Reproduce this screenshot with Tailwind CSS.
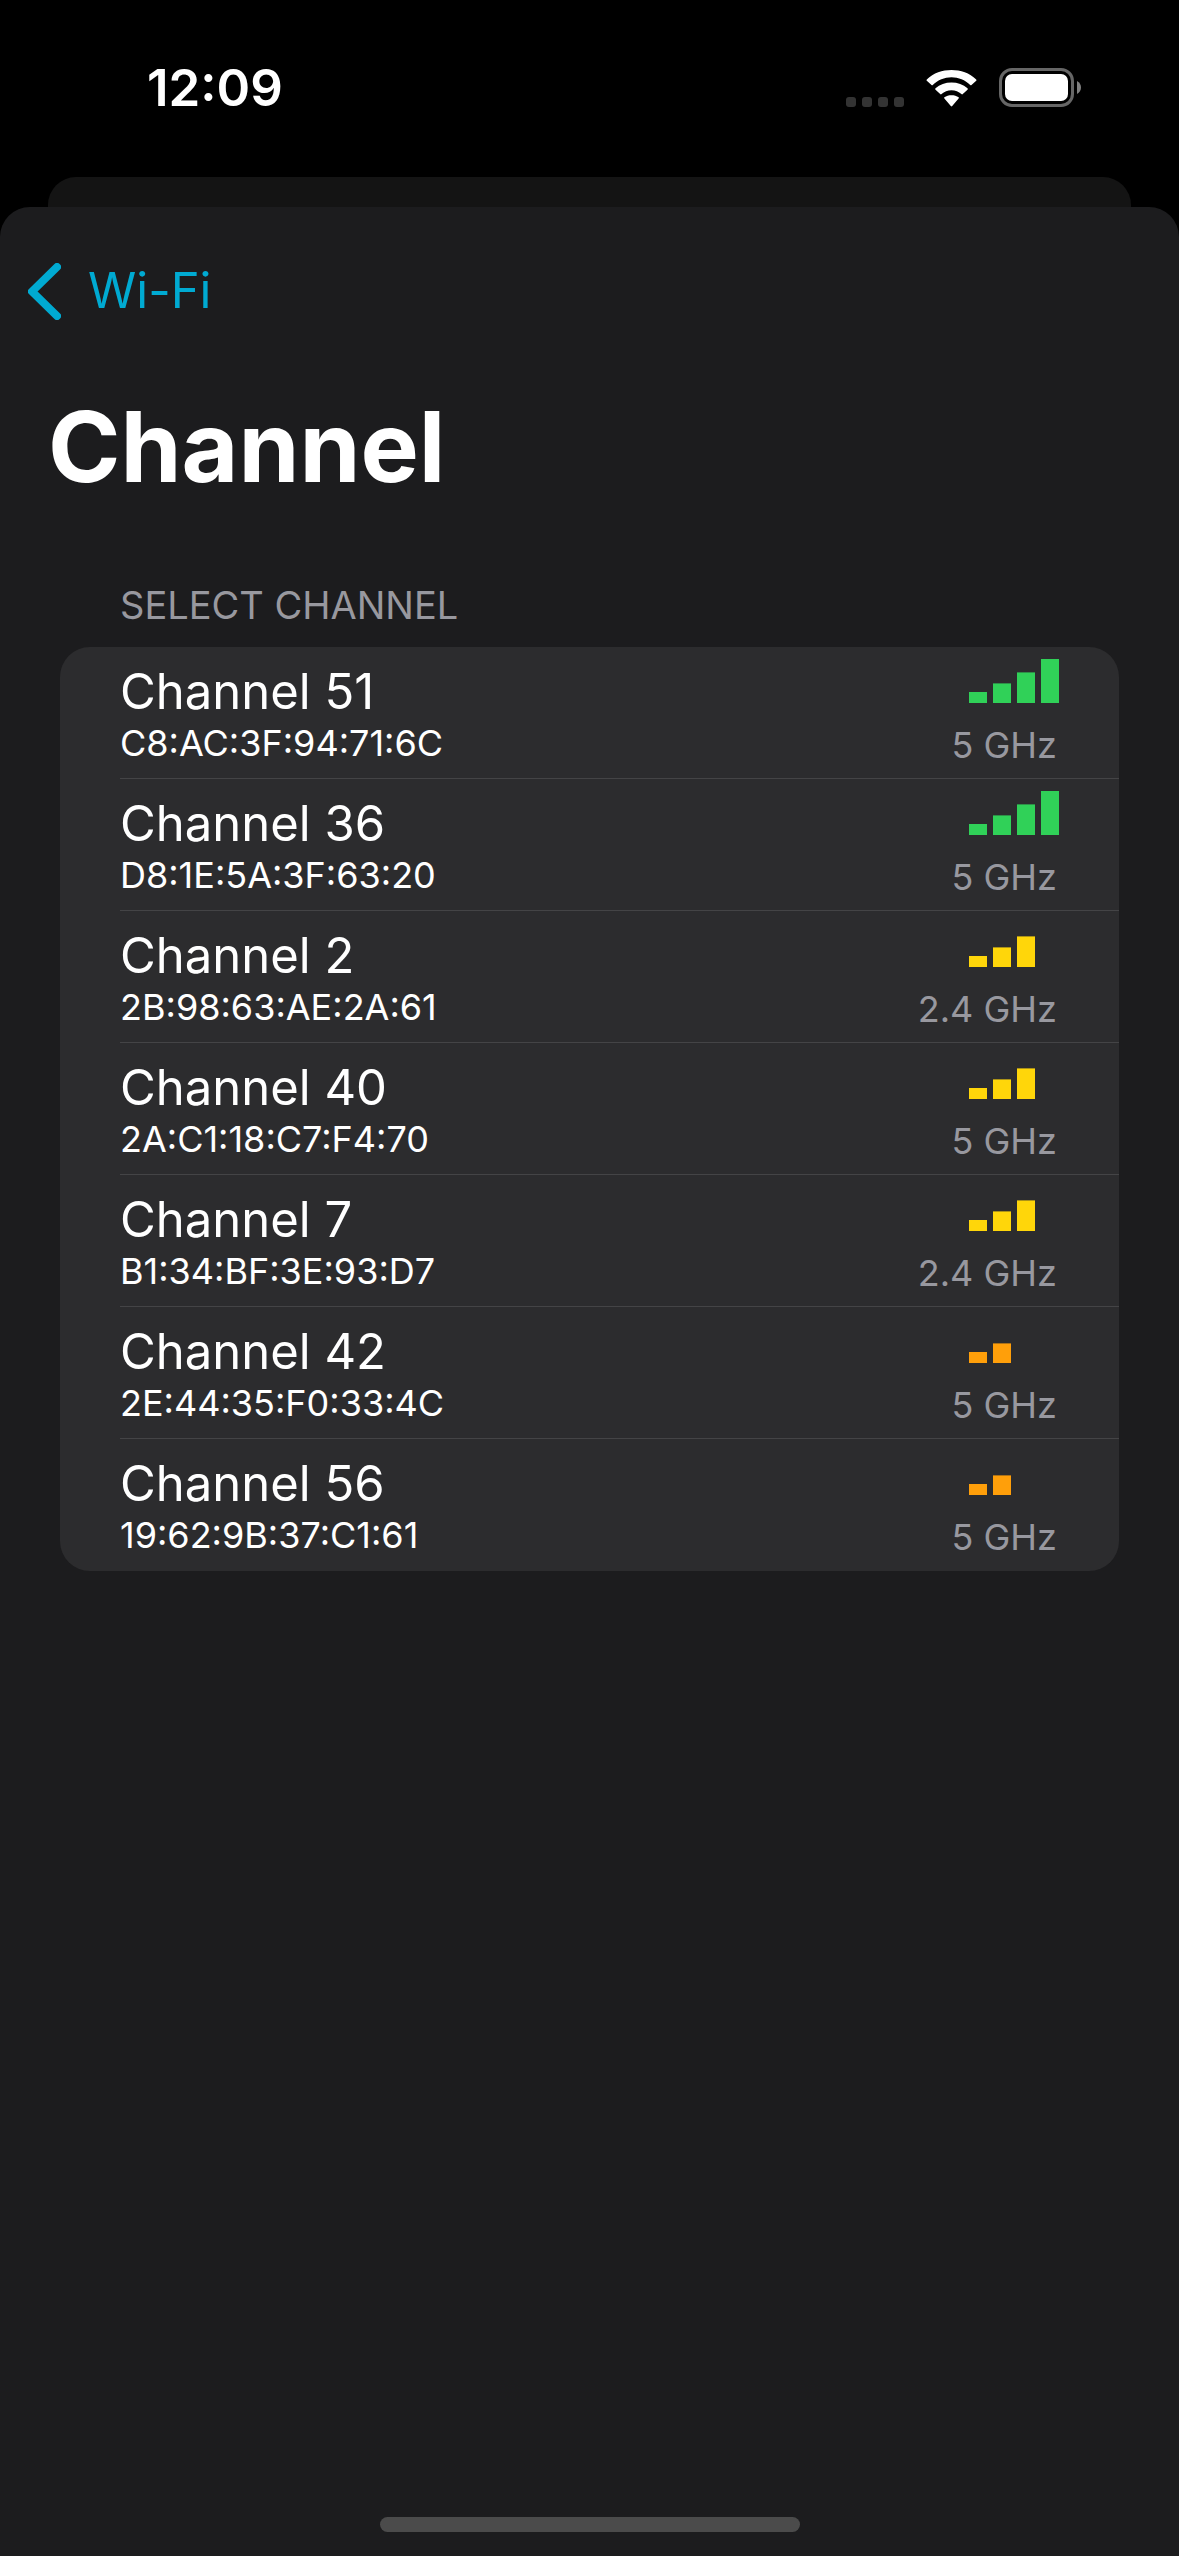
<!DOCTYPE html>
<html lang="en">
<head>
<meta charset="utf-8">
<meta name="viewport" content="width=device-width, initial-scale=1">
<title>Channel</title>
<script src="https://cdn.jsdelivr.net/npm/@tailwindcss/browser@4"></script>
</head>
<body class="flex min-h-screen flex-col bg-black font-['Inter',sans-serif] text-white antialiased">

<svg class="hidden" aria-hidden="true">
  <symbol id="signal-2" viewBox="0 0 90 44">
    <rect x="0" y="33" width="18" height="11"/>
    <rect x="24" y="24.4" width="18" height="19.6"/>
  </symbol>
  <symbol id="signal-3" viewBox="0 0 90 44">
    <rect x="0" y="33" width="18" height="11"/>
    <rect x="24" y="24.4" width="18" height="19.6"/>
    <rect x="48" y="13.4" width="18" height="30.6"/>
  </symbol>
  <symbol id="signal-4" viewBox="0 0 90 44">
    <rect x="0" y="33" width="18" height="11"/>
    <rect x="24" y="24.4" width="18" height="19.6"/>
    <rect x="48" y="13.4" width="18" height="30.6"/>
    <rect x="72" y="0" width="18" height="44"/>
  </symbol>
</svg>

<header class="flex h-[177px] items-start justify-between pt-[58px] pr-[98px] pl-[147px]">
  <time class="text-[51px] leading-[60px] font-semibold">12:09</time>
  <div class="flex items-end gap-[22px] pt-[10px]">
    <svg class="h-[38px] w-[58px]" viewBox="0 0 58 38" fill="#333333" role="img" aria-label="No cellular service">
      <rect x="0" y="28" width="10" height="10" rx="3"/>
      <rect x="16" y="28" width="10" height="10" rx="3"/>
      <rect x="32" y="28" width="10" height="10" rx="3"/>
      <rect x="48" y="28" width="10" height="10" rx="3"/>
    </svg>
    <svg class="h-[38px] w-[51px]" viewBox="0 0 51 38" fill="#ffffff" role="img" aria-label="Wi-Fi">
      <path d="M25.500 8.300C32.500 8.300 39.200 11.100 44.200 15.900Q44.900 16.600 45.500 15.900L50.200 11.800Q50.900 11.100 50.200 10.400C43.500 4 34.700 1 25.500 1S7.500 4 0.800 10.400Q0.100 11.100 0.800 11.800L5.500 15.900Q6.100 16.600 6.800 15.900C11.800 11.100 18.500 8.300 25.500 8.300Z"/>
      <path d="M25.500 21.300C29.400 21.300 32.700 22.700 35.400 25.100Q36.100 25.700 36.800 25.100L41.500 20.700Q42.200 20 41.500 19.300C37.200 15.500 31.600 13.500 25.500 13.500S13.800 15.500 9.500 19.300Q8.800 20 9.500 20.700L14.200 25.100Q14.900 25.700 15.600 25.100C18.300 22.700 21.600 21.300 25.500 21.300Z"/>
      <path d="M32.600 29.500Q33.300 28.900 32.600 28.300C30.700 26.800 28.200 26.200 25.500 26.200S20.300 26.800 18.400 28.300Q17.700 28.900 18.400 29.500L24.800 37.100Q25.500 37.800 26.200 37.100Z"/>
    </svg>
    <svg class="h-[39px] w-[82px]" viewBox="0 0 82 39" role="img" aria-label="Battery full">
      <rect x="1.500" y="1.500" width="72" height="36" rx="11.500" fill="none" stroke="#666666" stroke-width="3"/>
      <rect x="6" y="6" width="63" height="27" rx="7" fill="#ffffff"/>
      <path d="M78 13C80.600 14.200 82 16.700 82 19.500S80.600 24.800 78 26Z" fill="#808080"/>
    </svg>
  </div>
</header>

<div class="mx-12 h-[30px] shrink-0 rounded-t-[28px] bg-[#141414]"></div>

<main class="flex flex-1 flex-col rounded-t-[30px] bg-[#1c1c1e]">
  <nav class="flex pt-[54px] pl-[28px]">
    <a href="#" class="flex items-center gap-[27px] text-[49px] leading-[60px] text-[#00aad2]">
      <svg class="h-[57px] w-[33px]" viewBox="0 0 33 57" fill="none" stroke="currentColor" stroke-width="8" stroke-linecap="round" stroke-linejoin="round" aria-hidden="true">
        <path d="M29 4L4 28.500L29 53"/>
      </svg>
      Wi-Fi
    </a>
  </nav>

  <h1 class="pt-[66px] pl-[48px] text-[98px] leading-[120px] font-bold">Channel</h1>

  <section class="px-[60px] pt-[74px]">
    <h2 class="px-[60px] text-[38px] leading-[48px] text-[#98989f] uppercase">Select Channel</h2>
    <ul class="mt-[18px] overflow-hidden rounded-[30px] bg-[#2c2c2e]">
      <li class="pl-[60px]">
        <button type="button" class="flex h-[132px] w-full items-start justify-between border-b border-[#444446] pr-[60px] text-left">
          <span class="flex flex-col pt-[15px]"><span class="text-[49px] leading-[60px]">Channel 51</span><span class="text-[36px] leading-[42px]">C8:AC:3F:94:71:6C</span></span>
          <span class="flex flex-col items-end gap-[20px] pt-[12px]"><svg class="h-[44px] w-[90px] fill-[#30d158]" role="img" aria-label="Signal 4 of 4"><use href="#signal-4"/></svg><span class="pr-[2px] text-[36px] leading-[44px] text-[#98989f]">5 GHz</span></span>
        </button>
      </li>
      <li class="pl-[60px]">
        <button type="button" class="flex h-[132px] w-full items-start justify-between border-b border-[#444446] pr-[60px] text-left">
          <span class="flex flex-col pt-[15px]"><span class="text-[49px] leading-[60px]">Channel 36</span><span class="text-[36px] leading-[42px]">D8:1E:5A:3F:63:20</span></span>
          <span class="flex flex-col items-end gap-[20px] pt-[12px]"><svg class="h-[44px] w-[90px] fill-[#30d158]" role="img" aria-label="Signal 4 of 4"><use href="#signal-4"/></svg><span class="pr-[2px] text-[36px] leading-[44px] text-[#98989f]">5 GHz</span></span>
        </button>
      </li>
      <li class="pl-[60px]">
        <button type="button" class="flex h-[132px] w-full items-start justify-between border-b border-[#444446] pr-[60px] text-left">
          <span class="flex flex-col pt-[15px]"><span class="text-[49px] leading-[60px]">Channel 2</span><span class="text-[36px] leading-[42px]">2B:98:63:AE:2A:61</span></span>
          <span class="flex flex-col items-end gap-[20px] pt-[12px]"><svg class="h-[44px] w-[90px] fill-[#ffd60a]" role="img" aria-label="Signal 3 of 4"><use href="#signal-3"/></svg><span class="pr-[2px] text-[36px] leading-[44px] text-[#98989f]">2.4 GHz</span></span>
        </button>
      </li>
      <li class="pl-[60px]">
        <button type="button" class="flex h-[132px] w-full items-start justify-between border-b border-[#444446] pr-[60px] text-left">
          <span class="flex flex-col pt-[15px]"><span class="text-[49px] leading-[60px]">Channel 40</span><span class="text-[36px] leading-[42px]">2A:C1:18:C7:F4:70</span></span>
          <span class="flex flex-col items-end gap-[20px] pt-[12px]"><svg class="h-[44px] w-[90px] fill-[#ffd60a]" role="img" aria-label="Signal 3 of 4"><use href="#signal-3"/></svg><span class="pr-[2px] text-[36px] leading-[44px] text-[#98989f]">5 GHz</span></span>
        </button>
      </li>
      <li class="pl-[60px]">
        <button type="button" class="flex h-[132px] w-full items-start justify-between border-b border-[#444446] pr-[60px] text-left">
          <span class="flex flex-col pt-[15px]"><span class="text-[49px] leading-[60px]">Channel 7</span><span class="text-[36px] leading-[42px]">B1:34:BF:3E:93:D7</span></span>
          <span class="flex flex-col items-end gap-[20px] pt-[12px]"><svg class="h-[44px] w-[90px] fill-[#ffd60a]" role="img" aria-label="Signal 3 of 4"><use href="#signal-3"/></svg><span class="pr-[2px] text-[36px] leading-[44px] text-[#98989f]">2.4 GHz</span></span>
        </button>
      </li>
      <li class="pl-[60px]">
        <button type="button" class="flex h-[132px] w-full items-start justify-between border-b border-[#444446] pr-[60px] text-left">
          <span class="flex flex-col pt-[15px]"><span class="text-[49px] leading-[60px]">Channel 42</span><span class="text-[36px] leading-[42px]">2E:44:35:F0:33:4C</span></span>
          <span class="flex flex-col items-end gap-[20px] pt-[12px]"><svg class="h-[44px] w-[90px] fill-[#ff9f0a]" role="img" aria-label="Signal 2 of 4"><use href="#signal-2"/></svg><span class="pr-[2px] text-[36px] leading-[44px] text-[#98989f]">5 GHz</span></span>
        </button>
      </li>
      <li class="pl-[60px]">
        <button type="button" class="flex h-[132px] w-full items-start justify-between pr-[60px] text-left">
          <span class="flex flex-col pt-[15px]"><span class="text-[49px] leading-[60px]">Channel 56</span><span class="text-[36px] leading-[42px]">19:62:9B:37:C1:61</span></span>
          <span class="flex flex-col items-end gap-[20px] pt-[12px]"><svg class="h-[44px] w-[90px] fill-[#ff9f0a]" role="img" aria-label="Signal 2 of 4"><use href="#signal-2"/></svg><span class="pr-[2px] text-[36px] leading-[44px] text-[#98989f]">5 GHz</span></span>
        </button>
      </li>
    </ul>
  </section>

  <div class="mx-auto mt-auto mb-6 h-[15px] w-[420px] rounded-full bg-[#4b4b4b]"></div>
</main>

</body>
</html>
